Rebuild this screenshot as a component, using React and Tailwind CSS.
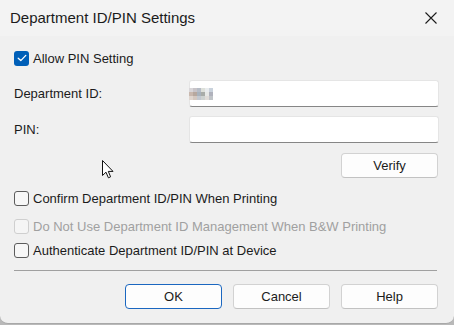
import React from 'react';

const font = { fontFamily: '"Liberation Sans", Arial, sans-serif' };

const BLUR = [
    ['#d9d6d9', '#c8c4c8', '#b6bcc6', '#dde0da', '#e9ecee', '#c9d2dc'],
    ['#c9b8ae', '#b7a89f', '#a8b2bc', '#a8aca8', '#e6e8e6', '#b0b2bc'],
    ['#e0d6cf', '#d4c8c0', '#c3c8d0', '#cdd2d0', '#e0dcd8', '#c0c4c8'],
];

const Checkbox = ({ checked, disabled, label }) => (
    <div className="flex items-center h-[16px]">
        {checked ? (
            <div className="w-[15px] h-[15px] rounded-[3px] bg-[#005fb8] flex items-center justify-center">
                <svg width="10" height="8" viewBox="0 0 10 8" fill="none">
                    <path d="M1.2 4.2 L3.8 6.6 L8.8 1.4" stroke="white" strokeWidth="1.3" strokeLinecap="round" strokeLinejoin="round" />
                </svg>
            </div>
        ) : (
            <div className={`w-[15px] h-[15px] rounded-[3px] border ${disabled ? 'border-[#cfcfcf] bg-[#f5f5f5]' : 'border-[#5c5c5c] bg-[#f7f7f7]'}`} />
        )}
        <span className={`ml-[4px] text-[13px] leading-none ${disabled ? 'text-[#a0a0a0]' : 'text-[#1b1b1b]'}`}>{label}</span>
    </div>
);

const Input = ({ children }) => (
    <div className="w-[250px] h-[27px] bg-white rounded-[3px] border border-[#e5e5e5] border-b-[#868686] flex items-center pl-[0px]">
        {children}
    </div>
);

const Button = ({ label, primary }) => (
    <button
        className={`w-[97px] h-[25px] rounded-[4px] bg-[#fdfdfd] text-[13px] text-[#1b1b1b] flex items-center justify-center ${primary ? 'border border-[#1b67c0]' : 'border border-[#d2d2d2] border-b-[#c2c2c2]'}`}
    >
        {label}
    </button>
);

export default function App() {
    return (
        <div className="w-[454px] h-[325px] bg-[#b9b9b9] overflow-hidden" style={font}>
            <div className="relative w-[454px] h-[324px] bg-[#f0f0f0] rounded-b-[8px] border-b border-[#a8a8a8] flex flex-col">
                <div className="h-[36px] bg-[#f3f3f3] flex items-center justify-between pl-[10px]">
                    <span className="text-[15px] text-[#1b1b1b]">Department ID/PIN Settings</span>
                    <div className="w-[46px] h-[36px] flex items-center justify-center">
                        <svg width="12" height="12" viewBox="0 0 12 12">
                            <path d="M0.5 0.5 L11.5 11.5 M11.5 0.5 L0.5 11.5" stroke="#1b1b1b" strokeWidth="1.1" />
                        </svg>
                    </div>
                </div>

                <div className="flex flex-col pl-[14px] pr-[15px]">
                    <div className="mt-[14px]">
                        <Checkbox checked label="Allow PIN Setting" />
                    </div>

                    <div className="mt-[14px] flex items-center justify-between">
                        <span className="text-[13px] text-[#1b1b1b]">Department ID:</span>
                        <Input>
                            <div className="flex flex-col ml-[-1px]">
                                {BLUR.map((row, i) => (
                                    <div key={i} className="flex">
                                        {row.map((c, j) => (
                                            <div key={j} className="w-[4px] h-[4px]" style={{ background: c }} />
                                        ))}
                                    </div>
                                ))}
                            </div>
                        </Input>
                    </div>

                    <div className="mt-[9px] flex items-center justify-between">
                        <span className="text-[13px] text-[#1b1b1b]">PIN:</span>
                        <Input />
                    </div>

                    <div className="mt-[10px] flex justify-end pr-[1px]">
                        <Button label="Verify" />
                    </div>

                    <div className="mt-[12px]">
                        <Checkbox label="Confirm Department ID/PIN When Printing" />
                    </div>
                    <div className="mt-[12px]">
                        <Checkbox disabled label="Do Not Use Department ID Management When B&W Printing" />
                    </div>
                    <div className="mt-[8px]">
                        <Checkbox label="Authenticate Department ID/PIN at Device" />
                    </div>

                    <div className="mt-[12px] h-px bg-[#a0a0a0] mr-[2px]" />

                    <div className="mt-[13px] flex justify-end gap-[11px] pr-[1px]">
                        <Button label="OK" primary />
                        <Button label="Cancel" />
                        <Button label="Help" />
                    </div>
                </div>

                <svg className="absolute left-[102px] top-[160px]" width="12" height="19" viewBox="0 0 12 19">
                    <path d="M0.5 0.5 L0.5 15.5 L4 12.2 L6.4 17.8 L8.6 16.8 L6.3 11.4 L11 11.4 Z" fill="white" stroke="#111" strokeWidth="1" strokeLinejoin="round" />
                </svg>
            </div>
        </div>
    );
}
